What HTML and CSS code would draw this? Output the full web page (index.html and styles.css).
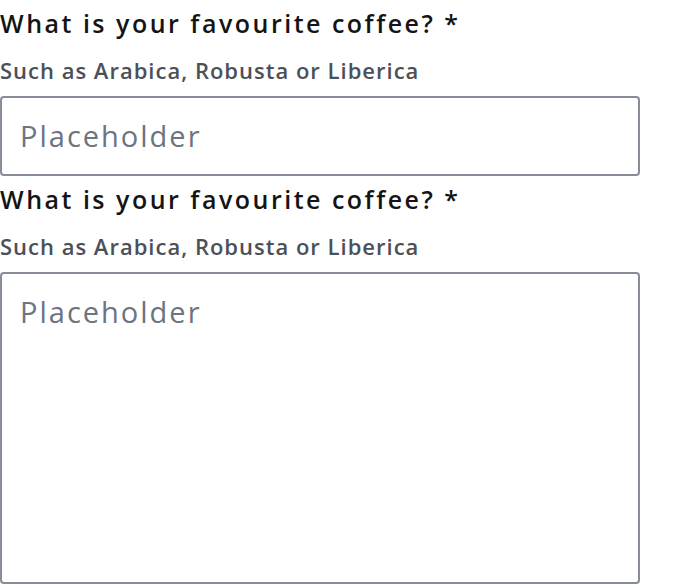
FILE: index.html
```html
<!DOCTYPE html>
<html lang="en">
<head>
<meta charset="utf-8">
<title>Coffee form</title>
<link rel="stylesheet" href="styles.css">
</head>
<body>
<form class="form">
  <div class="field">
    <label class="label" for="coffee1">What is your favourite coffee? *</label>
    <p class="hint">Such as Arabica, Robusta or Liberica</p>
    <input class="control input" id="coffee1" type="text" placeholder="Placeholder">
  </div>
  <div class="field">
    <label class="label" for="coffee2">What is your favourite coffee? *</label>
    <p class="hint">Such as Arabica, Robusta or Liberica</p>
    <textarea class="control textarea" id="coffee2" placeholder="Placeholder"></textarea>
  </div>
</form>
</body>
</html>
```

FILE: styles.css
```css
html, body {
  margin: 0;
  padding: 0;
  background: #ffffff;
}

body {
  font-family: "Open Sans", "Noto Sans", sans-serif;
}

.form {
  display: flex;
  flex-direction: column;
  width: 640px;
}

.field {
  display: flex;
  flex-direction: column;
}

.label {
  display: block;
  font-size: 25px;
  font-weight: 600;
  letter-spacing: 2.5px;
  line-height: 46px;
  padding-bottom: 2px;
  color: #141414;
  white-space: nowrap;
}

.hint {
  margin: 0;
  font-size: 22px;
  font-weight: 600;
  letter-spacing: 1px;
  line-height: 44px;
  padding-bottom: 4px;
  color: #4b5059;
  white-space: nowrap;
}

.control {
  box-sizing: border-box;
  width: 640px;
  margin: 0;
  border: 2px solid #878d97;
  border-radius: 4px;
  padding: 0 18px;
  font-family: "Open Sans", "Noto Sans", sans-serif;
  font-size: 29px;
  letter-spacing: 2px;
  color: #141414;
  background: #ffffff;
  outline: none;
}

.control::placeholder {
  color: #6b7480;
  opacity: 1;
}

.input {
  height: 80px;
  padding-bottom: 2px;
}

.textarea {
  height: 312px;
  padding-top: 18px;
  resize: none;
  line-height: normal;
}
```
